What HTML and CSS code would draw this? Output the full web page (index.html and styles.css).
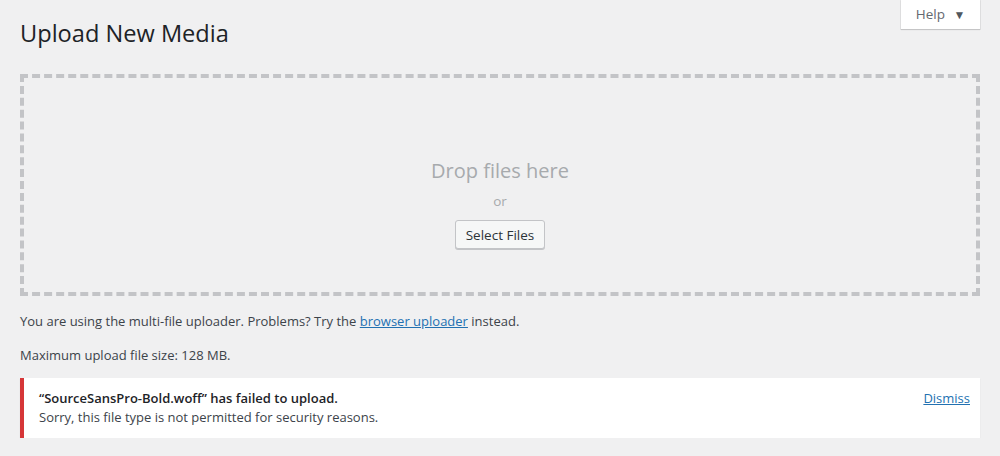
FILE: index.html
```html
<!DOCTYPE html>
<html>
<head>
<meta charset="utf-8">
<link rel="stylesheet" href="styles.css">
</head>
<body>
<div class="wrap">
  <div class="help-bar">
    <button class="help-tab">Help <span class="caret">▼</span></button>
  </div>
  <h1 class="title">Upload New Media</h1>
  <div class="dropzone">
    <div class="drop-text">Drop files here</div>
    <div class="or">or</div>
    <button class="select-btn">Select Files</button>
  </div>
  <p class="info">You are using the multi-file uploader. Problems? Try the <a href="#" class="link">browser uploader</a> instead.</p>
  <p class="info">Maximum upload file size: 128 MB.</p>
  <div class="notice">
    <div class="notice-body">
      <div class="notice-title">“SourceSansPro-Bold.woff” has failed to upload.</div>
      <div class="notice-msg">Sorry, this file type is not permitted for security reasons.</div>
    </div>
    <a href="#" class="link dismiss">Dismiss</a>
  </div>
</div>
</body>
</html>
```

FILE: styles.css
```css
html, body {
  margin: 0;
  padding: 0;
  background: #f0f0f1;
  font-family: "Open Sans", "Noto Sans", sans-serif;
  font-size: 13px;
  color: #3c434a;
}
.wrap {
  position: relative;
  padding: 0 20px;
}
.help-bar {
  position: absolute;
  top: 0;
  right: 20px;
}
.help-tab {
  width: 79px;
  height: 29px;
  background: #fff;
  border: none;
  box-shadow: 0 0 0 1px rgba(0,0,0,0.06), 0 1px 1px rgba(0,0,0,0.12);
  font-family: inherit;
  font-size: 13.5px;
  color: #646970;
  padding: 0 0 2px 0;
  cursor: pointer;
}
.caret {
  font-size: 12px;
  margin-left: 5px;
  color: #50575e;
}
.title {
  margin: 0;
  padding: 18px 0 0;
  height: 54px;
  box-sizing: border-box;
  font-size: 23.6px;
  font-weight: 400;
  color: #1d2327;
  line-height: 30px;
}
.dropzone {
  border: 4px dashed #c3c4c7;
  height: 214px;
  box-sizing: content-box;
  display: flex;
  flex-direction: column;
  align-items: center;
  justify-content: flex-start;
  margin-top: 20px;
}
.drop-text {
  font-size: 20px;
  color: #a7aaad;
  line-height: 28px;
  margin-top: 79px;
}
.or {
  font-size: 13.5px;
  color: #a7aaad;
  margin-top: 6px;
  line-height: 20px;
}
.select-btn {
  margin-top: 9px;
  height: 29px;
  width: 90px;
  padding: 0;
  background: #f6f7f7;
  border: 1px solid #c3c4c7;
  border-radius: 3px;
  box-shadow: 0 1px 0 #c3c4c7;
  font-family: inherit;
  font-size: 13.5px;
  color: #2c3338;
}
.info {
  margin: 15px 0 0;
  line-height: 20px;
}
.info + .info {
  margin-top: 14px;
}
.link {
  color: #2271b1;
  text-decoration: underline;
}
.notice {
  margin-top: 13px;
  background: #fff;
  border-left: 4px solid #d63638;
  box-shadow: 0 1px 1px rgba(0,0,0,0.1);
  display: flex;
  justify-content: space-between;
  align-items: flex-start;
  padding: 11px 10px 11px 15px;
}
.notice-title {
  font-weight: 600;
  color: #1d2327;
  line-height: 19px;
}
.notice-msg {
  line-height: 19px;
}
.dismiss {
  line-height: 19px;
}
```
